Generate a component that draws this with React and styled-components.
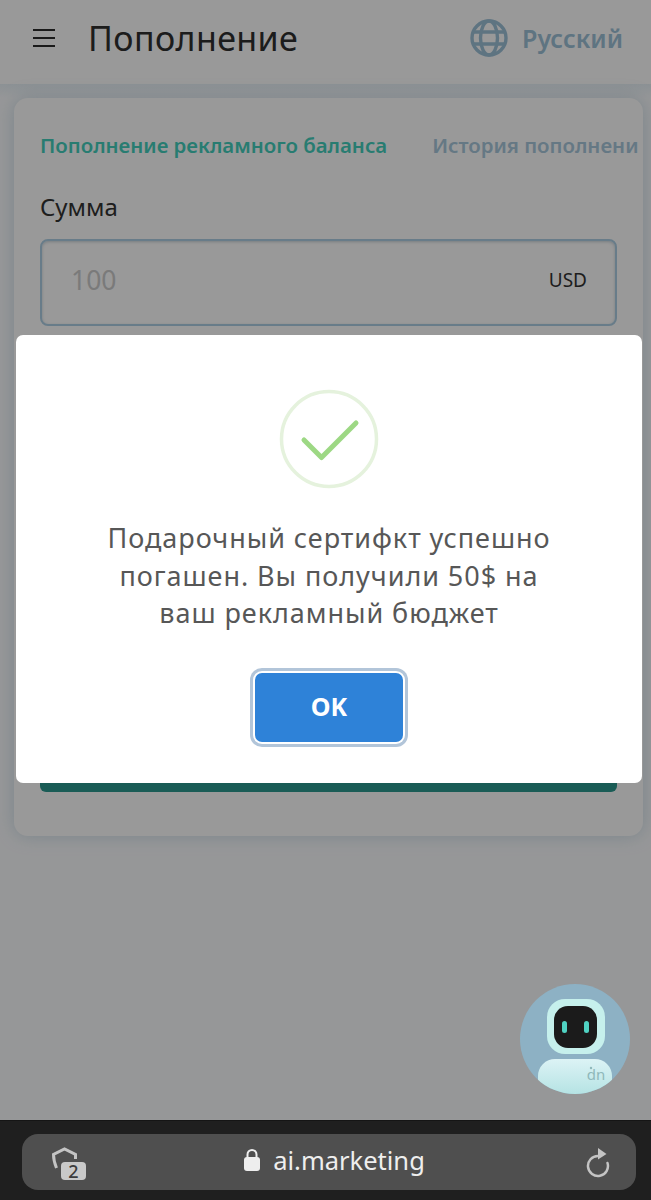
import React from "react";
import styled, { createGlobalStyle } from "styled-components";

const GlobalStyle = createGlobalStyle`
  html, body {
    margin: 0;
    padding: 0;
    background: #1f1f1f;
  }
  * {
    box-sizing: border-box;
  }
  body {
    font-family: "Noto Sans", "Open Sans", sans-serif;
  }
`;

const Screen = styled.div`
  width: 651px;
  height: 1200px;
  display: flex;
  flex-direction: column;
  overflow: hidden;
`;

const Page = styled.div`
  position: relative;
  height: 1120px;
  display: flex;
  flex-direction: column;
  background: #fbfcfe;
`;

const Header = styled.header`
  height: 84px;
  flex-shrink: 0;
  display: flex;
  align-items: center;
  padding: 0 28px 8px 33px;
  background: #ffffff;
`;

const Burger = styled.div`
  width: 22px;
  height: 18px;
  margin-right: 34px;
  display: flex;
  flex-direction: column;
  justify-content: space-between;
  span {
    display: block;
    height: 2px;
    background: #2c2c2c;
  }
`;

const Title = styled.h1`
  flex: 1;
  margin: 0 0 0 -1px;
  font-size: 34px;
  font-weight: 400;
  letter-spacing: 0.4px;
  color: #303030;
`;

const Language = styled.div`
  display: flex;
  align-items: center;
  gap: 14px;
  font-size: 25px;
  font-weight: 600;
  color: #9dc1d8;
`;

const Body = styled.div`
  flex: 1;
  padding: 14px 8px 284px 14px;
  display: flex;
  background: linear-gradient(#e9f2f7, #fbfcfe 14px);
`;

const Card = styled.main`
  flex: 1;
  min-width: 0;
  padding: 33px 0 44px 26px;
  display: flex;
  flex-direction: column;
  background: #ffffff;
  border-radius: 14px;
  box-shadow: 0 0 18px rgba(120, 165, 190, 0.35);
`;

const Tabs = styled.div`
  display: flex;
  gap: 45px;
  margin-right: 5px;
  overflow: hidden;
  white-space: nowrap;
`;

const Tab = styled.div`
  flex-shrink: 0;
  font-size: 20.4px;
  font-weight: 600;
  color: ${(p) => (p.$active ? "#44cfbd" : "#a8c8dc")};
`;

const FieldLabel = styled.label`
  display: block;
  margin-top: 31px;
  font-size: 24px;
  color: #323232;
`;

const AmountBox = styled.div`
  width: 577px;
  height: 87px;
  margin-top: 16px;
  padding: 0 28px 5px 29px;
  display: flex;
  align-items: center;
  justify-content: space-between;
  background: #ffffff;
  border: 2px solid #adcfe4;
  border-radius: 8px;
  box-shadow: inset 0 1px 3px rgba(90, 120, 140, 0.35);
`;

const Placeholder = styled.span`
  font-size: 26.5px;
  color: #cccccc;
`;

const Currency = styled.span`
  font-size: 19px;
  color: #323232;
`;

const SubmitBar = styled.div`
  width: 577px;
  height: 56px;
  margin-top: auto;
  background: #2c9a90;
  border-radius: 6px;
`;

const Overlay = styled.div`
  position: absolute;
  inset: 0;
  padding: 0 0 2px 16px;
  display: flex;
  align-items: center;
  background: rgba(0, 0, 0, 0.4);
`;

const Modal = styled.div`
  width: 626px;
  height: 448px;
  padding-top: 54px;
  display: flex;
  flex-direction: column;
  align-items: center;
  background: #ffffff;
  border-radius: 7px;
`;

const ModalText = styled.p`
  width: 470px;
  margin: 30px 0 0;
  font-size: 27px;
  line-height: 37.5px;
  letter-spacing: 0.95px;
  text-align: center;
  color: #575757;
`;

const OkButton = styled.button`
  width: 148px;
  height: 69px;
  margin-top: 41px;
  padding: 0 0 3px;
  border: none;
  border-radius: 7px;
  background: #2e82d8;
  color: #ffffff;
  font-family: inherit;
  font-size: 25px;
  font-weight: 700;
  box-shadow: 0 0 0 2px #ffffff, 0 0 0 5px #b2c5d9;
`;

const BotBubble = styled.div`
  position: absolute;
  left: 520px;
  top: 984px;
  width: 110px;
  height: 110px;
`;

const BrowserBar = styled.div`
  height: 80px;
  flex-shrink: 0;
  padding: 13px 15px 10px 22px;
  background: #1f1f1f;
  border-top: 1px solid #151515;
`;

const UrlPill = styled.div`
  position: relative;
  height: 56px;
  padding: 0 26px 0 30px;
  display: flex;
  align-items: center;
  justify-content: space-between;
  background: #4f4f4f;
  border-radius: 16px;
`;

const ShieldWrap = styled.div`
  position: relative;
  width: 34px;
  height: 33px;
  margin-top: 2px;
`;

const ShieldBadge = styled.span`
  position: absolute;
  right: 0;
  bottom: 0;
  width: 25px;
  height: 18px;
  display: flex;
  align-items: center;
  justify-content: center;
  background: #c9c9c9;
  border-radius: 4px;
  font-size: 18px;
  font-weight: 500;
  color: #3c3c3c;
`;

const Address = styled.div`
  display: flex;
  align-items: center;
  gap: 13px;
  margin: -4px 0 0 -3px;
  font-size: 25.5px;
  color: #eeeeee;
`;

const GlobeIcon = () => (
  <svg width="38" height="38" viewBox="0 0 38 38" fill="none" stroke="#9dc1d8" strokeWidth="3.4">
    <circle cx="19" cy="19" r="17" />
    <ellipse cx="19" cy="19" rx="8.5" ry="17" />
    <path d="M4 13h30M4 25h30" />
  </svg>
);

const CheckIcon = () => (
  <svg width="100" height="100" viewBox="0 0 100 100" fill="none">
    <circle cx="50" cy="50" r="47.5" stroke="#e5f2dd" strokeWidth="3.5" />
    <path
      d="M25 51L42.500 68.500L77 34"
      stroke="#9dd884"
      strokeWidth="5"
      strokeLinecap="round"
      strokeLinejoin="round"
    />
  </svg>
);

const BotIcon = () => (
  <svg width="110" height="110" viewBox="0 0 110 110">
    <defs>
      <clipPath id="botClip">
        <circle cx="55" cy="55" r="55" />
      </clipPath>
      <linearGradient id="botBody" x1="0" y1="0" x2="0" y2="1">
        <stop offset="0" stopColor="#dcf3f5" />
        <stop offset="1" stopColor="#a5dcdc" />
      </linearGradient>
    </defs>
    <circle cx="55" cy="55" r="55" fill="#8db1c4" />
    <g clipPath="url(#botClip)">
      <rect x="18" y="75" width="74" height="50" rx="17" fill="url(#botBody)" />
    </g>
    <rect x="27" y="15" width="58" height="55" rx="18" fill="#c6f0ec" />
    <rect x="34" y="22" width="43" height="42" rx="14" fill="#1b1b1b" />
    <rect x="42" y="37" width="5" height="12" rx="2.500" fill="#50d2c2" />
    <rect x="64" y="37" width="5" height="12" rx="2.500" fill="#50d2c2" />
    <circle cx="71" cy="84" r="1.200" fill="#8fb8ba" />
    <text x="76" y="96" textAnchor="middle" fontSize="15" fontFamily="Noto Sans, sans-serif" fill="#8fb8ba">
      dn
    </text>
  </svg>
);

const ShieldIcon = () => (
  <svg width="34" height="33" viewBox="0 0 34 33" fill="none" stroke="#c4c4c4" strokeWidth="3">
    <path d="M4.500 21C2.500 16 1.500 12 1.500 7.500L12.500 2L23.500 7.500V12" />
  </svg>
);

const LockIcon = () => (
  <svg width="16" height="22" viewBox="0 0 16 22" fill="#eeeeee">
    <rect x="0" y="8" width="16" height="14" rx="3" />
    <path d="M3.500 9V5.500a4.500 4.500 0 0 1 9 0V9" fill="none" stroke="#eeeeee" strokeWidth="2" />
  </svg>
);

const ReloadIcon = () => (
  <svg width="24" height="32" viewBox="0 0 24 32" fill="none">
    <path d="M12 10A10 10 0 1 0 21.500 17" stroke="#c4c4c4" strokeWidth="2.500" strokeLinecap="round" />
    <path d="M12 2L20.500 8L12 13.500Z" fill="#c4c4c4" />
  </svg>
);

export default function App() {
  return (
    <Screen>
      <GlobalStyle />
      <Page>
        <Header>
          <Burger>
            <span />
            <span />
            <span />
          </Burger>
          <Title>Пополнение</Title>
          <Language>
            <GlobeIcon />
            Русский
          </Language>
        </Header>
        <Body>
          <Card>
            <Tabs>
              <Tab $active>Пополнение рекламного баланса</Tab>
              <Tab>История пополнений</Tab>
            </Tabs>
            <FieldLabel>Сумма</FieldLabel>
            <AmountBox>
              <Placeholder>100</Placeholder>
              <Currency>USD</Currency>
            </AmountBox>
            <SubmitBar />
          </Card>
        </Body>
        <Overlay>
          <Modal>
            <CheckIcon />
            <ModalText>
              Подарочный сертифкт успешно погашен. Вы получили 50$ на ваш рекламный бюджет
            </ModalText>
            <OkButton>OK</OkButton>
          </Modal>
        </Overlay>
        <BotBubble>
          <BotIcon />
        </BotBubble>
      </Page>
      <BrowserBar>
        <UrlPill>
          <ShieldWrap>
            <ShieldIcon />
            <ShieldBadge>2</ShieldBadge>
          </ShieldWrap>
          <Address>
            <LockIcon />
            ai.marketing
          </Address>
          <ReloadIcon />
        </UrlPill>
      </BrowserBar>
    </Screen>
  );
}
